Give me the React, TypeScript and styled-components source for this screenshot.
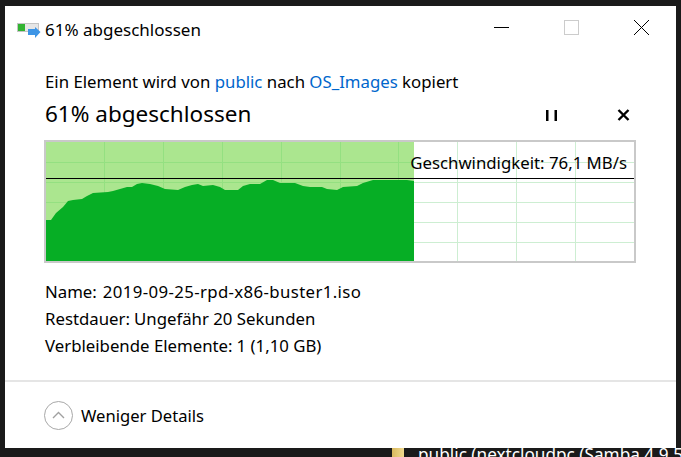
import React from "react";
import styled, { createGlobalStyle } from "styled-components";

const GlobalStyle = createGlobalStyle`
  html, body {
    margin: 0;
    padding: 0;
    height: 457px;
    overflow: hidden;
    background: #1a1a1a;
  }
  body {
    font-family: "Noto Sans", "Open Sans", sans-serif;
  }
`;

const Desktop = styled.div`
  width: 681px;
  height: 457px;
  padding: 6px 0 0 5px;
  box-sizing: border-box;
  overflow: hidden;
`;

const Dialog = styled.div`
  width: 671px;
  height: 442px;
  background: #fff;
  color: #000;
  display: flex;
  flex-direction: column;
`;

const TitleBar = styled.div`
  height: 46px;
  display: flex;
  align-items: center;
  padding: 0 27px 0 12px;
  flex: none;
`;

const TitleIcon = styled.svg`
  margin-top: 3px;
  flex: none;
`;

const TitleText = styled.span`
  font-size: 17px;
  margin-left: 4px;
  flex: 1;
`;

const WinButtons = styled.div`
  display: flex;
  align-items: center;
  gap: 55px;
  margin-top: -3px;
`;

const Body = styled.div`
  padding: 0 40px 0 40px;
  flex: 1;
`;

const CopyLine = styled.div`
  font-size: 16.8px;
  line-height: 20px;
  margin-top: 20px;
`;

const Link = styled.span`
  color: #0066cc;
`;

const HeadRow = styled.div`
  display: flex;
  align-items: center;
  justify-content: space-between;
  margin-top: 7px;
  height: 28px;
`;

const Heading = styled.div`
  font-size: 22.5px;
`;

const HeadControls = styled.div`
  display: flex;
  align-items: center;
  gap: 60px;
  margin: 4px 6px 0 0;
`;

const Graph = styled.div`
  position: relative;
  width: 592px;
  height: 123px;
  margin-top: 13px;
  margin-left: -1px;
  border: 2px solid #c9c9c9;
  box-sizing: border-box;
  background: #fff;
`;

const GraphSvg = styled.svg`
  display: block;
`;

const Speed = styled.span`
  position: absolute;
  right: 7px;
  top: 11px;
  font-size: 16.8px;
  line-height: 20px;
`;

const Details = styled.div`
  margin-top: 15px;
`;

const DetailRow = styled.div<{ $gap?: number }>`
  display: flex;
  gap: ${(p) => p.$gap ?? 4}px;
  height: 27px;
  align-items: center;
  font-size: 16.8px;
`;

const FileName = styled.span`
  letter-spacing: 0.37px;
`;

const Footer = styled.div`
  border-top: 2px solid #e5e5e5;
  height: 66px;
  flex: none;
  display: flex;
  align-items: center;
  padding: 0 0 0 39px;
  gap: 8px;
`;

const Chevron = styled.div`
  width: 29px;
  height: 29px;
  border: 1px solid #a8a8a8;
  border-radius: 50%;
  box-sizing: border-box;
  display: flex;
  align-items: center;
  justify-content: center;
`;

const FooterLabel = styled.span`
  font-size: 16.6px;
`;

const Behind = styled.div`
  display: flex;
  align-items: flex-start;
  margin-left: 387px;
  height: 9px;
  gap: 14px;
  color: #fff;
  font-size: 17.2px;
  line-height: 14px;
  white-space: nowrap;
`;

const FolderTab = styled.div`
  flex: none;
  width: 12px;
  height: 9px;
  background: linear-gradient(90deg, #d9b95f, #f0d98e);
`;

const topEdge: [number, number][] = [
  [0, 78], [5, 78], [10, 71], [17, 65], [22, 59], [27, 58], [36, 57], [41, 54],
  [47, 51], [62, 50], [67, 49], [74, 47], [81, 45], [86, 45], [91, 42], [96, 41],
  [104, 42], [112, 44], [119, 47], [132, 48], [139, 45], [146, 43], [152, 42],
  [157, 44], [167, 43], [174, 45], [179, 48], [192, 48], [197, 44], [204, 42],
  [214, 42], [221, 38], [227, 38], [234, 41], [249, 41], [257, 44], [264, 45],
  [276, 45], [281, 47], [291, 48], [297, 45], [311, 44], [317, 41], [327, 38],
  [344, 38], [361, 38], [368, 39],
];

const verticals = [58, 117, 176, 235, 294, 352, 411, 470, 529];
const horizontals = [20, 40, 60, 80, 100];

function SpeedChart() {
  const edge = topEdge.map(([x, y]) => `${x},${y}`).join(" ");
  return (
    <GraphSvg width="588" height="119" viewBox="0 0 588 119">
      {verticals.map((x) => (
        <line key={x} x1={x + 0.5} x2={x + 0.5} y1="0" y2="119" stroke="#cdeed2" />
      ))}
      {horizontals.map((y) => (
        <line key={y} x1="0" x2="588" y1={y + 0.5} y2={y + 0.5} stroke="#cdeed2" />
      ))}
      <rect x="0" y="0" width="368" height="119" fill="#abe68f" />
      {verticals.filter((x) => x < 368).map((x) => (
        <line key={x} x1={x + 0.5} x2={x + 0.5} y1="0" y2="119" stroke="#94e081" />
      ))}
      {horizontals.map((y) => (
        <line key={y} x1="0" x2="368" y1={y + 0.5} y2={y + 0.5} stroke="#94e081" />
      ))}
      <polygon points={`0,119 ${edge} 368,119`} fill="#06ae25" />
      <line x1="0" x2="588" y1="36.5" y2="36.5" stroke="#000" />
    </GraphSvg>
  );
}

function CopyIcon() {
  return (
    <TitleIcon width="24" height="16" viewBox="0 0 24 16">
      <rect x="0.5" y="0.5" width="21" height="8" fill="#e6e6e6" stroke="#c4c4c4" />
      <rect x="1" y="1" width="7" height="7" fill="#32b432" />
      <path d="M11 6h7V4l5.5 5L18 15v-3h-7z" fill="#3d95e6" />
    </TitleIcon>
  );
}

export default function App() {
  return (
    <Desktop>
      <GlobalStyle />
      <Dialog>
        <TitleBar>
          <CopyIcon />
          <TitleText>61% abgeschlossen</TitleText>
          <WinButtons>
            <svg width="15" height="15" viewBox="0 0 15 15">
              <path d="M0 7.5h15" stroke="#000" />
            </svg>
            <svg width="15" height="15" viewBox="0 0 15 15">
              <rect x="0.5" y="0.5" width="14" height="14" fill="none" stroke="#cccccc" />
            </svg>
            <svg width="15" height="15" viewBox="0 0 15 15">
              <path d="M0 0l15 15M15 0L0 15" stroke="#000" />
            </svg>
          </WinButtons>
        </TitleBar>
        <Body>
          <CopyLine>
            Ein Element wird von <Link>public</Link> nach <Link>OS_Images</Link> kopiert
          </CopyLine>
          <HeadRow>
            <Heading>61% abgeschlossen</Heading>
            <HeadControls>
              <svg width="11" height="11" viewBox="0 0 11 11">
                <path d="M0 0h2.5v11H0zM8.5 0H11v11H8.5z" fill="#000" />
              </svg>
              <svg width="13" height="12" viewBox="0 0 13 12">
                <path d="M1.5 1l10 10M11.5 1l-10 10" stroke="#000" strokeWidth="2.4" />
              </svg>
            </HeadControls>
          </HeadRow>
          <Graph>
            <SpeedChart />
            <Speed>Geschwindigkeit: 76,1 MB/s</Speed>
          </Graph>
          <Details>
            <DetailRow $gap={6}>
              <span>Name:</span>
              <FileName>2019-09-25-rpd-x86-buster1.iso</FileName>
            </DetailRow>
            <DetailRow>
              <span>Restdauer:</span>
              <span>Ungefähr 20 Sekunden</span>
            </DetailRow>
            <DetailRow>
              <span>Verbleibende Elemente:</span>
              <span>1 (1,10 GB)</span>
            </DetailRow>
          </Details>
        </Body>
        <Footer>
          <Chevron>
            <svg width="13" height="8" viewBox="0 0 13 8">
              <path d="M1 7l5.5-5.5L12 7" fill="none" stroke="#a0a0a0" strokeWidth="1.4" />
            </svg>
          </Chevron>
          <FooterLabel>Weniger Details</FooterLabel>
        </Footer>
      </Dialog>
      <Behind>
        <FolderTab />
        <span>public (nextcloudpc (Samba 4.9.5</span>
      </Behind>
    </Desktop>
  );
}
